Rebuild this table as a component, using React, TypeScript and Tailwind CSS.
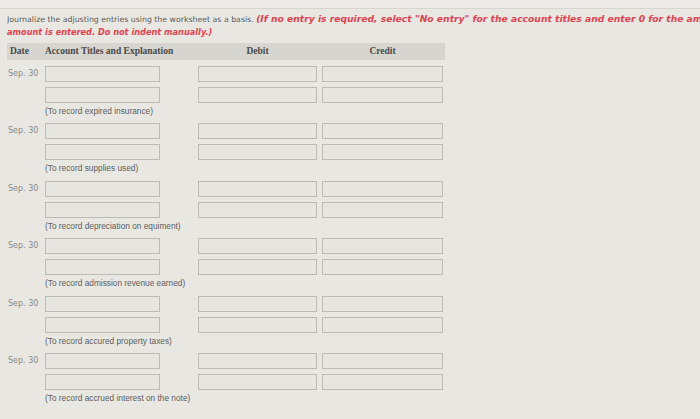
import React from "react";

const memos = [
  "(To record expired insurance)",
  "(To record supplies used)",
  "(To record depreciation on equiment)",
  "(To record admission revenue earned)",
  "(To record accured property taxes)",
  "(To record accrued interest on the note)",
];

const box = "h-[16px] border border-[#bcbbb6] bg-[#e6e5e0]";

function Row({ date }: { date?: string }) {
  return (
    <div className="flex items-center h-[16px]">
      <div
        className="w-[38px] pl-[1px] text-[8px] text-[#8a8a88]"
        style={{ fontFamily: '"DejaVu Sans", sans-serif' }}
      >
        {date ?? ""}
      </div>
      <div className={`w-[115px] ${box}`} />
      <div className={`ml-[38px] w-[119px] ${box}`} />
      <div className={`ml-[5px] w-[121px] ${box}`} />
    </div>
  );
}

export default function App() {
  return (
    <div className="w-[700px] h-[419px] overflow-hidden bg-[#e8e7e2]">
      <div className="h-[9px] bg-[#ecebe7] border-b border-[#d6d5d0]" />
      <div className="pl-[7px] pt-[4px]">
        <div
          className="text-[7.8px] leading-[12px] text-[#5c5c5a] whitespace-nowrap overflow-hidden w-[693px]"
          style={{ fontFamily: '"DejaVu Sans", Verdana, sans-serif' }}
        >
          Journalize the adjusting entries using the worksheet as a basis.{" "}
          <span className="text-[9.2px] text-[#dc4450] font-bold italic">
            (If no entry is required, select "No entry" for the account titles and enter 0 for the amounts. Credit account titles are automatically indented when the
          </span>
        </div>
        <div
          className="text-[8.2px] leading-[12px] text-[#dc4450] font-bold italic whitespace-nowrap"
          style={{ fontFamily: '"DejaVu Sans", Verdana, sans-serif' }}
        >
          amount is entered. Do not indent manually.)
        </div>

        <div
          className="mt-[5px] flex items-center h-[17px] w-[438px] bg-[#d6d5d0] text-[9.5px] font-bold text-[#4a4a48]"
          style={{ fontFamily: '"Liberation Serif", Georgia, serif' }}
        >
          <div className="w-[38px] pl-[3px]">Date</div>
          <div className="w-[153px]">Account Titles and Explanation</div>
          <div className="w-[119px] text-center">Debit</div>
          <div className="ml-[5px] w-[121px] text-center">Credit</div>
        </div>

        <div className="mt-[6px] flex flex-col">
          {memos.map((m, i) => (
            <div key={i} className="flex flex-col h-[57.4px]">
              <Row date="Sep. 30" />
              <div className="mt-[5px]">
                <Row />
              </div>
              <div
                className="pl-[38px] pt-[1px] text-[8.3px] leading-[15px] text-[#5e5e5c]"
                style={{ fontFamily: '"Liberation Sans", Tahoma, sans-serif' }}
              >
                {m}
              </div>
            </div>
          ))}
        </div>
      </div>
    </div>
  );
}
